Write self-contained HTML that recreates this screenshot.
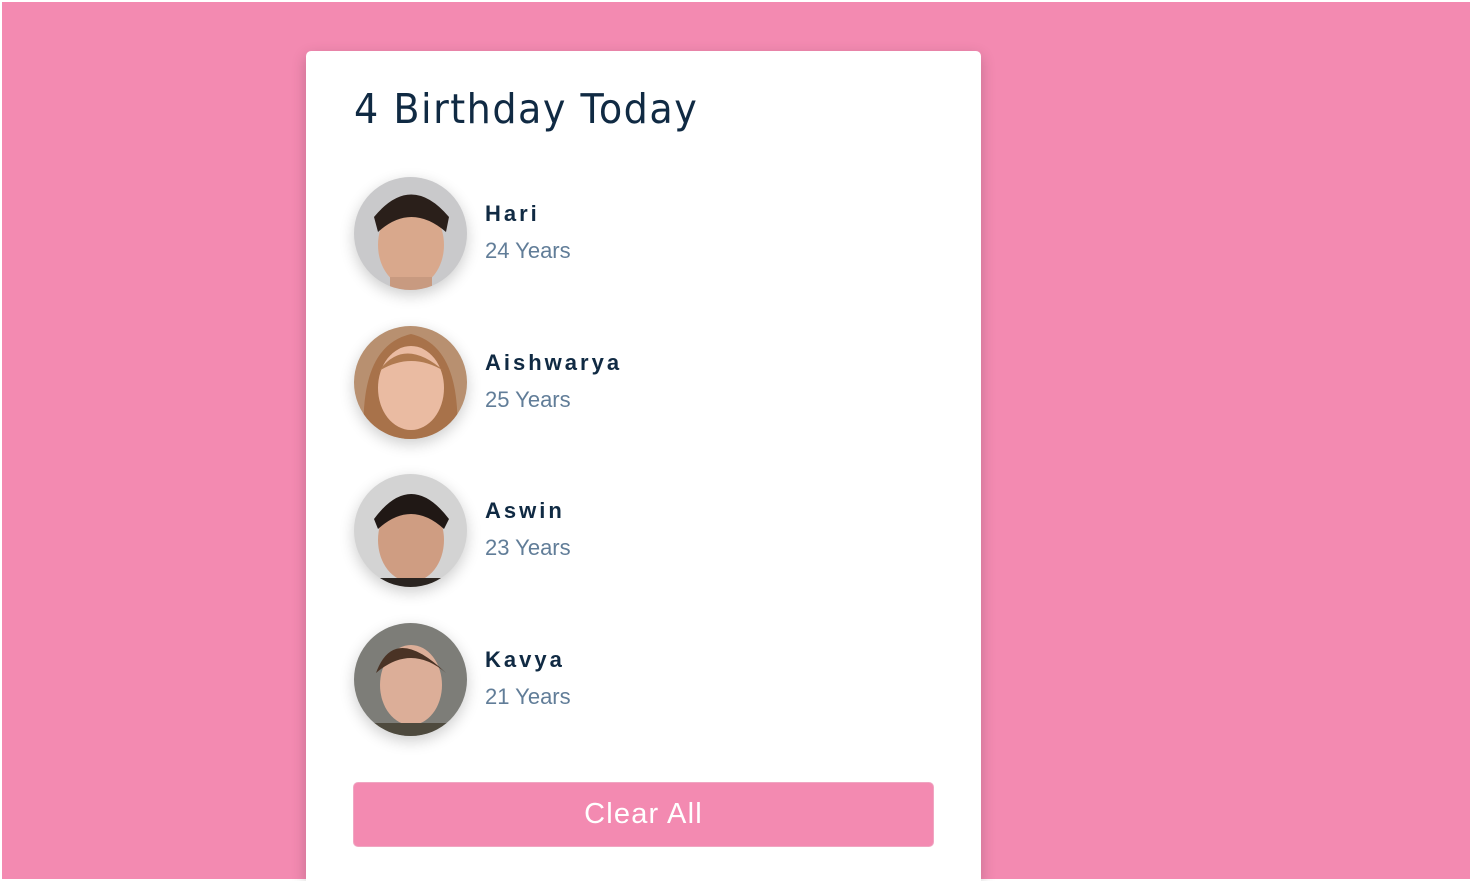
<!DOCTYPE html>
<html><head><style>
html,body{margin:0;padding:0;width:1472px;height:881px;overflow:hidden;}
body{background:#fff;position:relative;font-family:"Liberation Sans",sans-serif;}
.bg{position:absolute;left:2px;top:2px;width:1468px;height:877px;background:#f38ab1;}
.card{position:absolute;left:306px;top:51px;width:675px;height:830px;background:#fff;border-radius:5px 5px 0 0;box-shadow:0 5px 15px rgba(0,0,0,0.2);}
h3{position:absolute;left:48px;top:34px;margin:0;font-weight:400;font-size:41px;letter-spacing:1.6px;color:#102a43;font-family:"DejaVu Sans","Liberation Sans",sans-serif;transform:scaleX(0.93);transform-origin:left;}
.row{position:absolute;left:48px;width:560px;height:113px;}
.av{position:absolute;left:0;top:0;width:113px;height:113px;border-radius:50%;box-shadow:0 5px 15px rgba(0,0,0,0.2);overflow:hidden;}
.name{position:absolute;left:131px;top:24px;font-weight:700;font-size:22px;letter-spacing:3px;color:#102a43;}
.yrs{position:absolute;left:131px;top:61px;font-size:22px;color:#617d98;}
.btn{position:absolute;left:47px;top:731px;width:579px;height:63px;background:#f38ab1;border:1px solid #f0a6c2;border-radius:5px;color:#fff;font-size:29px;letter-spacing:1.2px;text-align:center;line-height:63px;}
</style></head><body>
<div class="bg"></div>
<div class="card">
<h3>4 Birthday Today</h3>
<div class="row" style="top:126px"><div class="av" style="background:#c9c9cb">
<svg width="113" height="113"><ellipse cx="57" cy="68" rx="33" ry="42" fill="#d9a88c"/><path d="M20 40 Q57 -5 95 40 L92 55 Q57 25 24 55Z" fill="#2a1f1a"/><rect x="36" y="100" width="42" height="20" fill="#c89a80"/></svg></div>
<div class="name">Hari</div><div class="yrs">24 Years</div></div>
<div class="row" style="top:275px"><div class="av" style="background:#b89070">
<svg width="113" height="113"><path d="M10 113 Q5 20 57 8 Q108 20 103 113Z" fill="#a8724a"/><ellipse cx="57" cy="62" rx="33" ry="42" fill="#eabba2"/><path d="M25 45 Q50 10 90 45 Q57 25 25 45Z" fill="#b07a50"/></svg></div>
<div class="name">Aishwarya</div><div class="yrs">25 Years</div></div>
<div class="row" style="top:423px"><div class="av" style="background:#d3d3d3">
<svg width="113" height="113"><ellipse cx="57" cy="66" rx="33" ry="42" fill="#cf9d82"/><path d="M20 45 Q57 -5 95 45 L90 55 Q57 25 24 55Z" fill="#201815"/><rect x="20" y="104" width="74" height="10" fill="#2a2420"/></svg></div>
<div class="name">Aswin</div><div class="yrs">23 Years</div></div>
<div class="row" style="top:572px"><div class="av" style="background:#7d7d78">
<svg width="113" height="113"><ellipse cx="57" cy="62" rx="31" ry="40" fill="#dcae98"/><path d="M22 50 Q40 0 92 50 Q57 20 22 50Z" fill="#4a3325"/><rect x="15" y="100" width="84" height="14" fill="#4e4a3e"/></svg></div>
<div class="name">Kavya</div><div class="yrs">21 Years</div></div>
<div class="btn">Clear All</div>
</div>
</body></html>
